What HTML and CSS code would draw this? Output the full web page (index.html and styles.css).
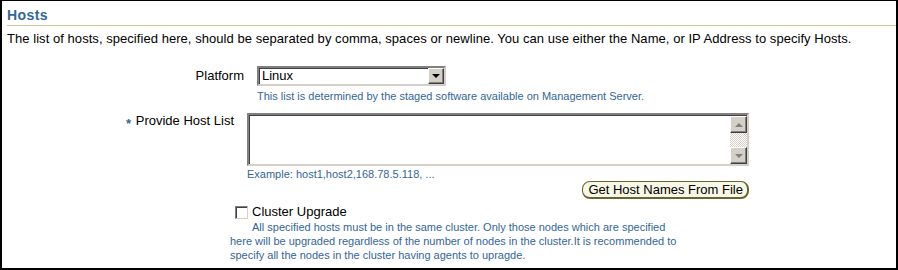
FILE: index.html
```html
<!DOCTYPE html>
<html lang="en">
<head>
  <meta charset="UTF-8">
  <title>Hosts</title>
  <link rel="stylesheet" href="styles.css">
</head>
<body>
  <div id="panel">
    <h2 class="title">Hosts</h2>
    <p class="intro">The list of hosts, specified here, should be separated by comma, spaces or newline. You can use either the Name, or IP Address to specify Hosts.</p>

    <div class="row platform">
      <label class="label">Platform</label>
      <div class="field">
        <div class="select">
          <span class="value">Linux</span>
          <span class="drop"><i class="arrow"></i></span>
        </div>
        <div class="hint">This list is determined by the staged software available on Management Server.</div>
      </div>
    </div>

    <div class="row hostlist">
      <label class="label"><span class="req">*</span> Provide Host List</label>
      <div class="field">
        <div class="textarea">
          <div class="text"></div>
          <div class="scroll">
            <span class="sbtn"><i class="arrow up"></i></span>
            <span class="track"></span>
            <span class="sbtn"><i class="arrow"></i></span>
          </div>
        </div>
        <div class="hint">Example: host1,host2,168.78.5.118, ...</div>
        <div class="actions">
          <button class="btn">Get Host Names From File</button>
        </div>
      </div>
    </div>

    <div class="cluster">
      <div class="check">
        <span class="box"></span>
        <span>Cluster Upgrade</span>
      </div>
      <div class="hint note">All specified hosts must be in the same cluster. Only those nodes which are specified here will be upgraded regardless of the number of nodes in the cluster.It is recommended to specify all the nodes in the cluster having agents to upragde.</div>
    </div>
  </div>
</body>
</html>
```

FILE: styles.css
```css
* {
  margin: 0;
  padding: 0;
  box-sizing: border-box;
}
body {
  font-family: "Liberation Sans", Arial, sans-serif;
  font-size: 13px;
  color: #000;
  background: #fff;
}
#panel {
  width: 898px;
  height: 270px;
  border: 2px solid #000;
  border-top-width: 1px;
  padding: 0 0 0 5px;
}
.title {
  font-size: 14px;
  font-weight: bold;
  letter-spacing: 0.4px;
  color: #336699;
  line-height: 17px;
  padding-top: 6px;
  padding-bottom: 1px;
  border-bottom: 1px solid #cccc99;
}
.intro {
  line-height: 16px;
  margin-top: 5px;
  letter-spacing: 0.05px;
}
.hint {
  font-size: 11px;
  color: #336699;
  line-height: 14px;
}
.row {
  display: flex;
}
.label {
  text-align: right;
}
.platform {
  margin-top: 19px;
}
.platform .label {
  width: 237px;
  margin-right: 13px;
  line-height: 20px;
}
.select {
  width: 189px;
  height: 20px;
  display: flex;
  border: 2px solid;
  border-color: #808080 #d4d0c8 #d4d0c8 #808080;
  box-shadow: inset 1px 1px 0 #404040;
  background: #fff;
}
.select .value {
  flex: 1;
  padding-left: 3px;
  line-height: 16px;
}
.drop, .sbtn {
  width: 16px;
  display: flex;
  align-items: center;
  justify-content: center;
  background: #d4d0c8;
  border: 1px solid;
  border-color: #fff #404040 #404040 #fff;
  box-shadow: inset -1px -1px 0 #808080;
}
.arrow {
  width: 0;
  height: 0;
  border-left: 4px solid transparent;
  border-right: 4px solid transparent;
  border-top: 4px solid #000;
}
.arrow.up {
  border-top: 0;
  border-bottom: 4px solid #000;
}
.scroll .arrow {
  border-top-color: #808080;
}
.scroll .arrow.up {
  border-bottom-color: #808080;
}
.platform .hint {
  margin-top: 3px;
}
.hostlist {
  margin-top: 10px;
}
.hostlist .label {
  width: 227px;
  margin-right: 13px;
  line-height: 16px;
}
.req {
  display: inline-block;
  color: #336699;
  font-size: 13px;
  font-weight: bold;
  vertical-align: -3px;
  margin-right: 1px;
}
.field {
  display: flex;
  flex-direction: column;
}
.hostlist .field {
  width: 502px;
}
.textarea {
  height: 53px;
  display: flex;
  border: 2px solid;
  border-color: #808080 #d4d0c8 #d4d0c8 #808080;
  box-shadow: inset 1px 1px 0 #404040;
  background: #fff;
}
.textarea .text {
  flex: 1;
}
.scroll {
  width: 17px;
  display: flex;
  flex-direction: column;
  margin: 1px 0 0;
}
.sbtn {
  width: 17px;
  height: 17px;
}
.track {
  flex: 1;
  background-color: #fff;
  background-image: conic-gradient(#d4d0c8 25%, #fff 0 50%, #d4d0c8 0 75%, #fff 0);
  background-size: 2px 2px;
}
.hostlist .hint {
  margin-top: 1px;
}
.actions {
  display: flex;
  justify-content: flex-end;
}
.btn {
  font-family: inherit;
  font-size: 13px;
  height: 18px;
  padding: 0 4px 0 5px;
  background: #f7f7e7;
  border: 1px solid #666633;
  border-right-width: 2px;
  border-bottom-width: 2px;
  border-radius: 8px;
  line-height: 14px;
}
.cluster {
  margin-left: 223px;
  margin-top: 5px;
}
.check {
  display: flex;
  align-items: center;
  gap: 4px;
  line-height: 16px;
  margin-left: 5px;
}
.box {
  width: 13px;
  height: 13px;
  border: 1px solid;
  border-color: #808080 #d4d0c8 #d4d0c8 #808080;
  box-shadow: inset 1px 1px 0 #404040;
  background: #fff;
}
.note {
  width: 450px;
  text-indent: 22px;
  margin-top: 0;
}
```
